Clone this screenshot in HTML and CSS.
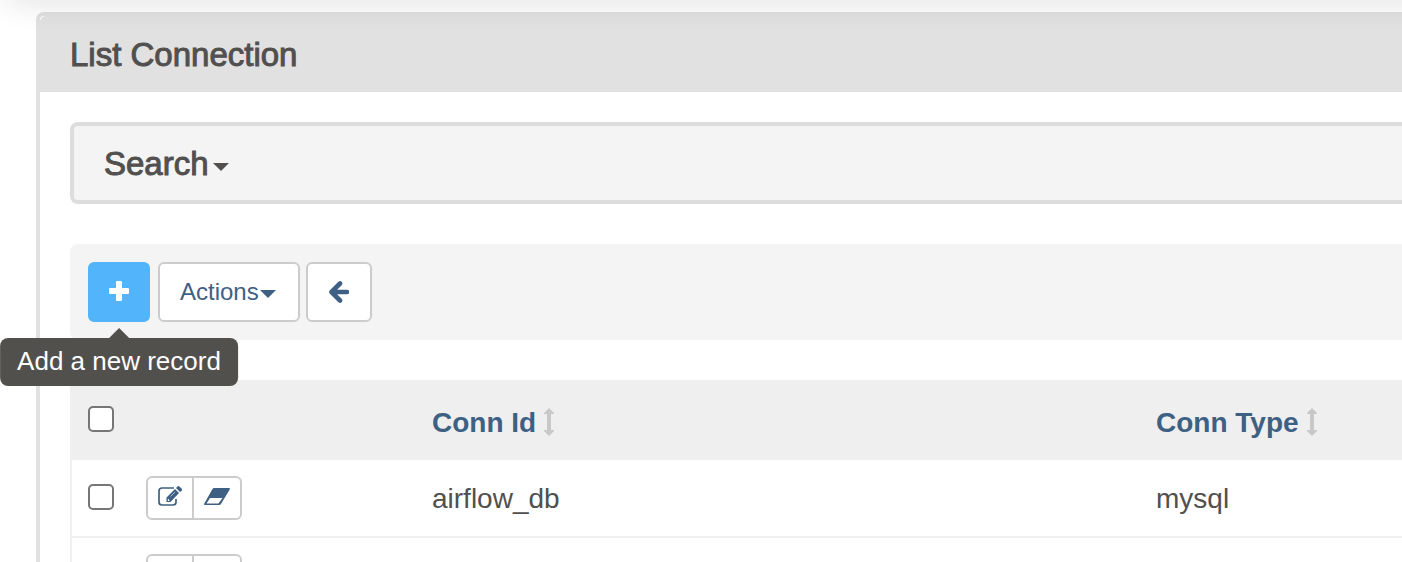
FILE: index.html
```html
<!DOCTYPE html>
<html lang="en">
<head>
<meta charset="utf-8">
<title>List Connection</title>
<link rel="stylesheet" href="styles.css">
</head>
<body>
<svg class="symbols" aria-hidden="true">
  <symbol id="sort" viewBox="0 0 10 28"><path d="M5 0l5 5v1H7v16h3v1l-5 5-5-5v-1h3V6H0V5z"/></symbol>
  <symbol id="edit" viewBox="0 0 26 22"><path d="M17 2H5Q2 2 2 5v11q0 3 3 3h11q3 0 3-3v-3" fill="none" stroke="currentColor" stroke-width="1.700"/><path d="M18 3l4 4L13.500 16H9.500V11.500zM19 2l1.500-1.500q1-.8 2 0l2.200 2.200q.8 1 0 2L23 6z"/><path d="M10.900 12.600l1.900 1.900-.8.500h-1.100v-1.300z" fill="#fff"/><path d="M13.500 10.500l4.500-4.500" fill="none" stroke="#fff" stroke-width=".6"/></symbol>
  <symbol id="erase" viewBox="0 0 26 20"><path fill-rule="evenodd" d="M10 1h15q1.500 0 .7 1.600L17 17q-.8 1-2 1H1Q-.5 18 .3 16.500L8.500 2Q9 1 10 1zM2.500 16.500h12L18.500 11H6z"/></symbol>
</svg>
<div class="navbar-edge"></div>
<main class="panel">
  <header class="panel-heading"><h1 class="heading">List Connection</h1></header>
  <div class="panel-body">
    <section class="search">
      <button class="search-toggle heading" type="button">Search<span class="caret"></span></button>
    </section>
    <div class="toolbar">
      <div class="add-wrap">
        <button class="btn btn-primary" type="button" aria-label="Add a new record" aria-describedby="add-tip">
          <svg class="icon-plus" viewBox="0 0 20 20"><path d="M8 0h4q1 0 1 1v6h6q1 0 1 1v4q0 1-1 1h-6v6q0 1-1 1H8q-1 0-1-1v-6H1q-1 0-1-1V8q0-1 1-1h6V1q0-1 1-1z"/></svg>
        </button>
        <div class="tooltip" id="add-tip" role="tooltip">Add a new record</div>
      </div>
      <button class="btn btn-actions" type="button">Actions<span class="caret"></span></button>
      <button class="btn btn-back" type="button" aria-label="Back">
        <svg class="icon-back" viewBox="0 0 20 22"><path d="M2.500 11L11 2.500M2.500 11l8.500 8.500M4 11h14" fill="none" stroke="currentColor" stroke-width="4.600" stroke-linecap="round"/><path d="M3 11l5-5v10z"/></svg>
      </button>
    </div>
    <table class="records">
      <colgroup><col class="col-check"><col class="col-tools"><col class="col-id"><col></colgroup>
      <thead>
        <tr>
          <th><input class="check" type="checkbox" aria-label="Select all"></th>
          <th></th>
          <th><a class="sort-link" href="#">Conn Id<svg class="icon-sort"><use href="#sort"/></svg></a></th>
          <th><a class="sort-link" href="#">Conn Type<svg class="icon-sort"><use href="#sort"/></svg></a></th>
        </tr>
      </thead>
      <tbody>
        <tr>
          <td><input class="check" type="checkbox" aria-label="Select airflow_db"></td>
          <td><div class="group"><a class="tool" href="#" aria-label="Edit record"><svg class="icon-edit"><use href="#edit"/></svg></a><a class="tool" href="#" aria-label="Delete record"><svg class="icon-erase"><use href="#erase"/></svg></a></div></td>
          <td>airflow_db</td>
          <td>mysql</td>
        </tr>
        <tr>
          <td><input class="check" type="checkbox" aria-label="Select record"></td>
          <td><div class="group"><a class="tool" href="#" aria-label="Edit record"><svg class="icon-edit"><use href="#edit"/></svg></a><a class="tool" href="#" aria-label="Delete record"><svg class="icon-erase"><use href="#erase"/></svg></a></div></td>
          <td></td>
          <td></td>
        </tr>
      </tbody>
    </table>
  </div>
</main>
</body>
</html>
```
FILE: styles.css
```css
* { box-sizing: border-box; }

html { height: 100%; overflow: hidden; }

body {
  margin: 0;
  height: 100%;
  overflow: hidden;
  background: #fff;
  color: #51504f;
  font-family: "Liberation Sans", Arial, sans-serif;
  font-size: 28px;
}

svg { display: block; fill: currentColor; }

.symbols { position: absolute; width: 0; height: 0; }

/* Shadow cast by the navigation bar above the scrolled content */
.navbar-edge {
  position: absolute;
  top: -20px;
  left: 8px;
  right: -40px;
  height: 20px;
  box-shadow: 0 0 32px rgba(0, 0, 0, 0.16);
}

.panel {
  margin: 12px 0 0 36px;
  border: 4px solid #e1e1e1;
  border-right: 0;
  border-radius: 8px 0 0 0;
}

.panel-heading {
  padding: 21px 30px 19px;
  background: #e1e1e1;
  border-radius: 6px 0 0 0;
}

.heading {
  margin: 0;
  font-size: 33px;
  font-weight: 400;
  line-height: 36px;
  -webkit-text-stroke: 1px currentColor;
}

.panel-body { padding: 30px 0 0 30px; }

.search {
  border: 4px solid #ddd;
  border-right: 0;
  border-radius: 8px 0 0 8px;
  background: #f4f4f4;
}

.search-toggle {
  display: flex;
  align-items: center;
  gap: 4px;
  width: 100%;
  padding: 20px 30px 18px;
  border: 0;
  background: none;
  color: inherit;
  font-family: inherit;
}

.caret {
  margin-top: 4px;
  border: 8px solid transparent;
  border-top-color: currentColor;
  border-bottom: 0;
}

.search-toggle .caret { margin-top: 6px; }

.toolbar {
  display: flex;
  gap: 8px;
  margin-top: 40px;
  padding: 18px;
  border-radius: 8px 0 0 8px;
  background: #f4f4f4;
}

.add-wrap { position: relative; }

.btn {
  display: flex;
  align-items: center;
  justify-content: center;
  height: 60px;
  padding: 0 20px;
  border: 2px solid #ccc;
  border-radius: 6px;
  background: #fff;
  color: #3e6083;
  font-family: inherit;
  font-size: 24px;
}

.btn-primary {
  width: 62px;
  border-color: #52b4fa;
  background: #52b4fa;
  color: #fff;
}

.btn-actions { padding: 0 22px 0 20px; gap: 1px; }

.btn-back { width: 66px; margin-left: -2px; }

.icon-plus { flex: none; width: 20px; height: 20px; margin-bottom: 2px; }
.icon-back { flex: none; width: 20px; height: 22px; }

.tooltip {
  position: absolute;
  z-index: 1;
  top: 76px;
  left: 50%;
  transform: translateX(-50%);
  padding: 7px 17px 9px;
  border-radius: 8px;
  background: #51504d;
  color: #fff;
  font-size: 26px;
  line-height: 32px;
  white-space: nowrap;
}

.tooltip::before {
  content: "";
  position: absolute;
  bottom: 100%;
  left: 50%;
  margin-left: -10px;
  border: 10px solid transparent;
  border-top: 0;
  border-bottom-color: #51504d;
}

.records {
  width: 100%;
  margin-top: 40px;
  border-left: 2px solid #efefef;
  border-spacing: 0;
  table-layout: fixed;
}

.col-check { width: 58px; }
.col-tools { width: 286px; }
.col-id { width: 724px; }

.records th,
.records td {
  padding: 16px;
  text-align: left;
  vertical-align: top;
  line-height: 46px;
}

.records th {
  height: 80px;
  padding: 20px 16px 14px;
  background: #efefef;
}

.records td { height: 78px; padding-bottom: 14px; border-bottom: 2px solid #efefef; }

.check {
  display: block;
  appearance: none;
  width: 26px;
  height: 26px;
  margin: 8px 0 0;
  border: 2px solid #767676;
  border-radius: 5px;
  background: #fff;
}

.records th .check { margin-top: 6px; }

.sort-link {
  display: flex;
  align-items: center;
  gap: 8px;
  color: #3e6083;
  text-decoration: none;
}

.icon-sort { width: 10px; height: 28px; margin-bottom: 2px; color: #c8c8c8; }

.group {
  display: flex;
  width: 96px;
  height: 44px;
  border: 2px solid #ccc;
  border-radius: 6px;
  background: #fff;
}

.tool {
  display: flex;
  flex: 1;
  align-items: center;
  justify-content: center;
  padding-bottom: 2px;
  color: #3e6083;
}

.tool:first-child { flex: 0 0 44px; }

.tool + .tool { border-left: 2px solid #ccc; }

.icon-edit { width: 26px; height: 22px; }
.icon-erase { width: 26px; height: 20px; }
```
